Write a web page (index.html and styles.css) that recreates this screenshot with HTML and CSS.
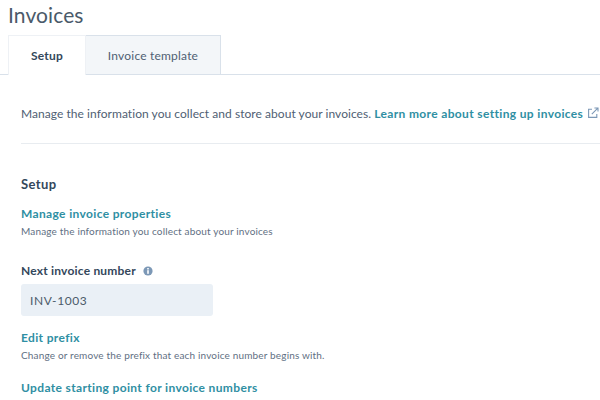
FILE: index.html
```html
<!DOCTYPE html>
<html lang="en">

<head>
     <meta charset="UTF-8">
     <title>Invoices</title>
     <link rel="stylesheet" href="styles.css">
</head>

<body>
     <h1 class="title">Invoices</h1>
     <div class="tabs">
          <div class="tab active">Setup</div>
          <div class="tab">Invoice template</div>
     </div>
     <div class="content">
          <p class="intro">
               Manage the information you collect and store about your invoices.
               <a class="link" href="#">Learn more about setting up invoices</a>
               <svg class="external" width="12" height="12" viewBox="0 0 12 12" fill="none" stroke="#7c98b6" stroke-width="1.1">
                    <path d="M5 2.2H1.6v8.2h8.2V7" />
                    <path d="M4.8 7.2L10.8 1.2M7.4 1h3.6v3.6" />
               </svg>
          </p>
          <hr class="divider">
          <h2 class="sectionTitle">Setup</h2>
          <a class="link block" href="#">Manage invoice properties</a>
          <p class="help">Manage the information you collect about your invoices</p>
          <div class="label">
               Next invoice number
               <svg class="info" width="10" height="10" viewBox="0 0 10 10">
                    <circle cx="5" cy="5" r="4.6" fill="#7c98b6" />
                    <rect x="4.2" y="4.2" width="1.6" height="3.6" fill="#fff" />
                    <rect x="4.2" y="2" width="1.6" height="1.5" fill="#fff" />
               </svg>
          </div>
          <div class="field">INV-1003</div>
          <a class="link block prefix" href="#">Edit prefix</a>
          <p class="help">Change or remove the prefix that each invoice number begins with.</p>
          <a class="link block update" href="#">Update starting point for invoice numbers</a>
     </div>
</body>

</html>
```

FILE: styles.css
```css
* {
     margin: 0px;
     padding: 0px;
     box-sizing: border-box;
     font-family: "Lato", "Noto Sans", sans-serif;
}

html, body {
     height: 400px;
     overflow: hidden;
}

body {
     background-color: #fff;
     color: #33475b;
}

.title {
     font-size: 21px;
     line-height: 26px;
     font-weight: 400;
     letter-spacing: 0.1px;
     padding: 2px 0px 0px 8px;
     color: #4a5a6a;
}

.tabs {
     display: flex;
     margin-top: 7px;
     height: 40px;
     padding-left: 8px;
     border-bottom: 1px solid #d9e1ea;
}

.tab {
     display: flex;
     justify-content: center;
     align-items: center;
     width: 135px;
     height: 40px;
     font-size: 12px;
     letter-spacing: 0.2px;
     background-color: #f3f6f9;
     border: 1px solid #d9e1ea;
     border-left: none;
     color: #4f6073;
}

.tab.active {
     width: 78px;
     font-weight: 700;
     background-color: #fff;
     border: 1px solid #eef1f5;
     border-bottom: none;
     color: #33475b;
}

.content {
     padding: 31px 0px 0px 21px;
}

.intro {
     font-size: 12px;
     line-height: 16px;
     letter-spacing: 0.05px;
     color: #4f6073;
     white-space: nowrap;
}

.link {
     color: #2f8fa3;
     font-weight: 700;
     text-decoration: none;
     letter-spacing: 0.35px;
}

.external {
     margin-left: 1px;
     vertical-align: -1px;
}

.divider {
     border: none;
     border-top: 1px solid #e8ecf0;
     margin-top: 21px;
}

.sectionTitle {
     font-size: 13px;
     line-height: 18px;
     font-weight: 700;
     letter-spacing: 0.4px;
     margin-top: 31px;
     color: #33475b;
}

.block {
     display: block;
     font-size: 12px;
     line-height: 16px;
}

.sectionTitle + .block {
     margin-top: 13px;
}

.help {
     font-size: 10px;
     line-height: 14px;
     letter-spacing: 0.16px;
     margin-top: 2px;
     color: #5f7083;
}

.label {
     display: flex;
     align-items: center;
     gap: 7px;
     font-size: 12px;
     line-height: 16px;
     font-weight: 700;
     letter-spacing: 0.2px;
     margin-top: 25px;
     color: #33475b;
}

.field {
     display: flex;
     align-items: center;
     width: 192px;
     height: 32px;
     margin-top: 5px;
     padding-left: 9px;
     font-size: 12px;
     letter-spacing: 0.6px;
     background-color: #eaf0f6;
     border-radius: 3px;
     color: #4a5a6a;
}

.prefix {
     margin-top: 14px;
}

.update {
     margin-top: 18px;
}
```
